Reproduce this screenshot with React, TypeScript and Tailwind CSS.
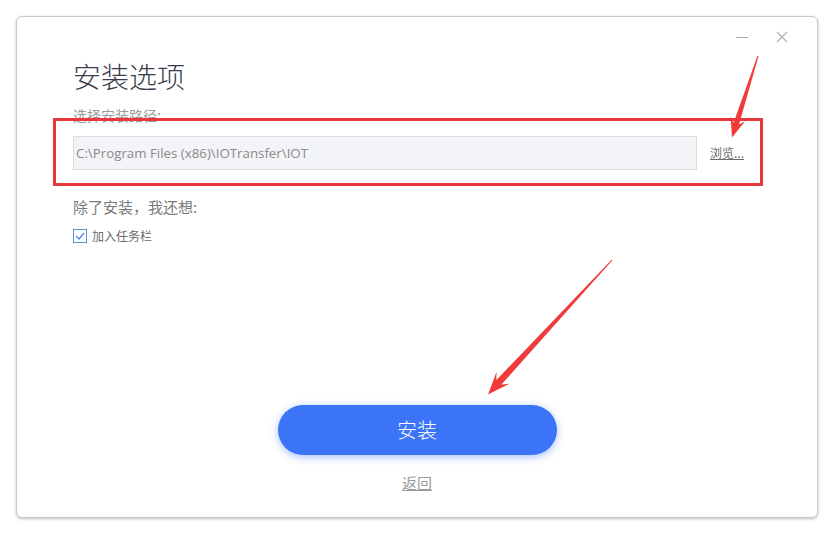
import { useState } from 'react';

const FONT = '"Microsoft YaHei", "Noto Sans CJK SC", sans-serif';
const LATIN = '"Open Sans", "Noto Sans CJK SC", sans-serif';

// Red annotation arrows drawn over the page
function Arrows() {
  return (
    <svg className="absolute inset-0 pointer-events-none" width={834} height={534} viewBox="0 0 834 534">
      <polygon
        fill="#f03b3b"
        points="758.5,56.2 739,124.6 745,121.2 732,137.5 730.6,116.6 733.6,122.8 757.5,55.8"
      />
      <polygon
        fill="#f03b3b"
        points="612.4,260.3 501.4,384.6 509.4,383.8 488,394.5 496.5,372 496.4,380 611.6,259.7"
      />
    </svg>
  );
}

export default function App() {
  const [taskbar, setTaskbar] = useState(true);
  const [path, setPath] = useState('C:\\Program Files (x86)\\IOTransfer\\IOT');

  return (
    <div className="relative w-[834px] h-[534px] bg-white overflow-hidden" style={{ fontFamily: FONT }}>
      <div className="absolute left-[16px] top-[16px] w-[802px] h-[502px] rounded-[6px] border border-[#c9c9c9] bg-white shadow-[0_1px_3px_rgba(0,0,0,0.25)] flex flex-col">
        {/* Window controls */}
        <div className="h-[43px] flex justify-end items-start pt-[13px] pr-[29px] gap-[27px]">
          <button className="w-[13px] h-[14px] flex items-center justify-center" aria-label="Minimize">
            <span className="block w-[12px] h-px bg-[#a9a9a9]" />
          </button>
          <button className="w-[13px] h-[14px] flex items-center justify-center" aria-label="Close">
            <svg width="12" height="12" viewBox="0 0 12 12" stroke="#b0b0b0" strokeWidth="1.2">
              <path d="M1 1l10 10M11 1L1 11" />
            </svg>
          </button>
        </div>

        <div className="pl-[56px] flex flex-col">
          <h1 className="text-[28px] leading-[32px] text-[#3a3d49] font-light">安装选项</h1>
          <div className="mt-[13px] text-[14px] leading-[20px] text-[#9a9a9a]">选择安装路径:</div>

          <div className="mt-[11px] flex items-center">
            <input
              value={path}
              onChange={(e) => setPath(e.target.value)}
              className="w-[624px] h-[34px] bg-[#f3f4f7] border border-[#dcdde0] px-[2px] text-[13.3px] text-[#8a8a8a] outline-none"
              style={{ fontFamily: LATIN }}
            />
            <a href="#" className="ml-[13px] text-[12px] leading-[16px] text-[#6b6b6b] underline">
              浏览...
            </a>
          </div>

          <div className="mt-[27px] text-[15px] leading-[20px] text-[#7a7a7a]">除了安装，我还想:</div>

          <label className="mt-[9px] h-[20px] flex items-center gap-[5px] cursor-pointer">
            <span
              onClick={() => setTaskbar(!taskbar)}
              className="w-[14px] h-[14px] border border-[#5a8de0] bg-white flex items-center justify-center"
            >
              {taskbar && (
                <svg width="10" height="8" viewBox="0 0 10 8" fill="none" stroke="#4f85dc" strokeWidth="1.3">
                  <path d="M1 4l3 3 5-6" />
                </svg>
              )}
            </span>
            <span className="text-[12px] text-[#6b6b6b]">加入任务栏</span>
          </label>
        </div>

        <button className="mt-[159px] mx-auto w-[279px] h-[50px] rounded-full bg-[#3b74f6] text-white text-[20px] font-light shadow-[0_2px_8px_rgba(59,116,246,0.45)]">
          安装
        </button>
        <a href="#" className="mt-[18px] mx-auto text-[15px] leading-[20px] text-[#9a9a9a] underline">
          返回
        </a>
      </div>

      {/* Red annotation box */}
      <div className="absolute left-[53px] top-[118px] w-[710px] h-[68px] border-[3px] border-[#e8373d] pointer-events-none" />
      <Arrows />
    </div>
  );
}
